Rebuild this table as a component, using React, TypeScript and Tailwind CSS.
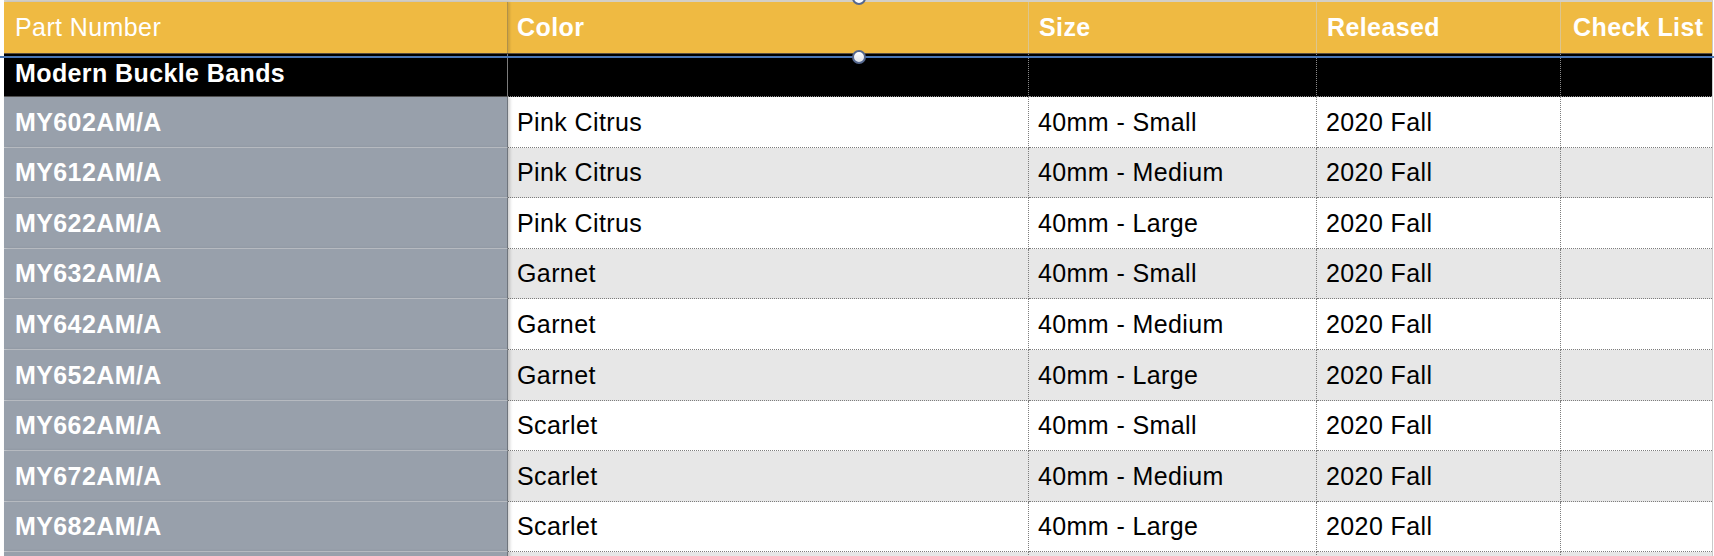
import React from 'react';

interface BandRow {
  part: string;
  color: string;
  size: string;
  released: string;
}

const rows: BandRow[] = [
  { part: 'MY602AM/A', color: 'Pink Citrus', size: '40mm - Small', released: '2020 Fall' },
  { part: 'MY612AM/A', color: 'Pink Citrus', size: '40mm - Medium', released: '2020 Fall' },
  { part: 'MY622AM/A', color: 'Pink Citrus', size: '40mm - Large', released: '2020 Fall' },
  { part: 'MY632AM/A', color: 'Garnet', size: '40mm - Small', released: '2020 Fall' },
  { part: 'MY642AM/A', color: 'Garnet', size: '40mm - Medium', released: '2020 Fall' },
  { part: 'MY652AM/A', color: 'Garnet', size: '40mm - Large', released: '2020 Fall' },
  { part: 'MY662AM/A', color: 'Scarlet', size: '40mm - Small', released: '2020 Fall' },
  { part: 'MY672AM/A', color: 'Scarlet', size: '40mm - Medium', released: '2020 Fall' },
  { part: 'MY682AM/A', color: 'Scarlet', size: '40mm - Large', released: '2020 Fall' },
  { part: '', color: '', size: '', released: '' },
];

const cols = 'grid grid-cols-[504px_521px_288px_244px_151px]';

const DataRow = ({ row, shaded }: { row: BandRow; shaded: boolean }) => {
  const bg = shaded ? 'bg-[#e7e7e7]' : 'bg-white';
  const cell = `flex items-center px-[9px] pt-[1px] border-b border-r border-dotted border-[#7d7d7d] ${bg}`;
  return (
    <div className={`${cols} h-[50.6px]`}>
      {/* frozen column */}
      <div className="relative z-10 flex items-center px-[11px] pt-[1px] bg-[#98a0ab] border-b border-[#c4c8ce] border-r border-r-[#6f757d] shadow-[2px_0_3px_rgba(0,0,0,0.18)] text-white font-bold">
        {row.part}
      </div>
      <div className={cell}>{row.color}</div>
      <div className={cell}>{row.size}</div>
      <div className={cell}>{row.released}</div>
      <div className={`flex items-center px-[10px] border-b border-dotted border-[#7d7d7d] ${bg}`} />
    </div>
  );
};

export default function App() {
  return (
    <div className="relative w-[1714px] h-[556px] overflow-hidden whitespace-nowrap bg-white font-['Liberation_Sans',Arial,sans-serif] text-[25px] tracking-[0.4px] text-black">
      <div className="ml-[4px] w-[1709px] border-t-2 border-[#d3cfc6] border-r border-r-[#c9c9c9]">
        {/* header */}
        <div className={`${cols} h-[52px] bg-[#efba42] border-b border-[#5b503f] text-white`}>
          <div className="flex items-center px-[11px] pt-[1px] border-r border-[#b0914a] shadow-[2px_0_2px_rgba(0,0,0,0.12)]">Part Number</div>
          <div className="flex items-center px-[9px] pt-[1px] font-bold border-r border-[#dcc58e]">Color</div>
          <div className="flex items-center px-[10px] pt-[1px] font-bold border-r border-[#dcc58e]">Size</div>
          <div className="flex items-center px-[10px] pt-[1px] font-bold border-r border-[#dcc58e]">Released</div>
          <div className="flex items-center px-[12px] pt-[1px] font-bold overflow-hidden">Check List</div>
        </div>

        {/* group row */}
        <div className={`${cols} h-[43px] bg-black text-white font-bold`}>
          <div className="flex items-center px-[11px] pb-[3px] border-r border-[#7b7b7b] border-b border-b-[#555]">Modern Buckle Bands</div>
          <div className="border-r border-b border-dotted border-[#8a8a8a]" />
          <div className="border-r border-b border-dotted border-[#8a8a8a]" />
          <div className="border-r border-b border-dotted border-[#8a8a8a]" />
          <div className="border-b border-dotted border-[#8a8a8a]" />
        </div>

        {rows.map((row, i) => (
          <DataRow key={i} row={row} shaded={i % 2 === 1} />
        ))}
      </div>

      {/* selection guide */}
      <div className="absolute left-0 top-[56px] w-full h-[2px] bg-[#4a76b4] z-20" />
      <div className="absolute left-[852px] top-[50px] w-[14px] h-[14px] rounded-full border-2 border-[#55688f] bg-gradient-to-b from-[#ffffff] to-[#dfe3ea] z-30" />
      <div className="absolute left-[852px] top-[-9px] w-[14px] h-[14px] rounded-full border-2 border-[#55688f] bg-white z-30" />
    </div>
  );
}
